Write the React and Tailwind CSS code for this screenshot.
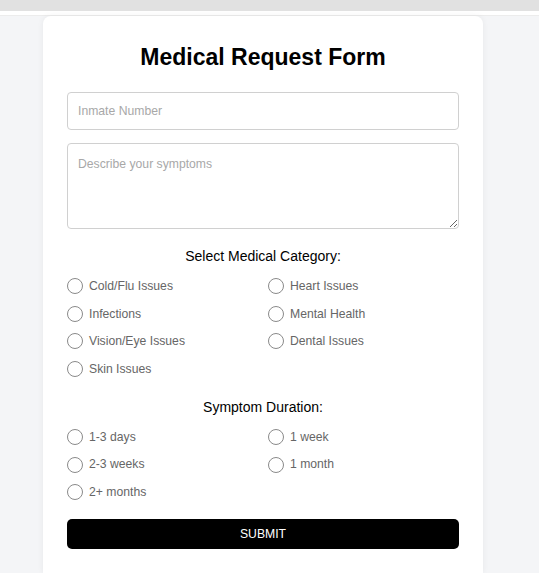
import React from "react";

const categories = [
	"Cold/Flu Issues",
	"Heart Issues",
	"Infections",
	"Mental Health",
	"Vision/Eye Issues",
	"Dental Issues",
	"Skin Issues",
];

const durations = ["1-3 days", "1 week", "2-3 weeks", "1 month", "2+ months"];

function Radio({ label }) {
	return (
		<label className="flex items-center h-[18px] gap-[6px] cursor-pointer">
			<span className="w-[16px] h-[16px] rounded-full border border-[#8a8a8a] bg-white shrink-0"></span>
			<span className="text-[12.2px] text-[#666666]">{label}</span>
		</label>
	);
}

function App() {
	return (
		<div
			className="min-h-[573px] bg-[#f4f5f7] flex flex-col"
			style={{ fontFamily: '"Liberation Sans", Arial, sans-serif' }}>
			{/* browser-ish top strip */}
			<div className="h-[11px] bg-[#e1e1e1]"></div>
			<div className="h-[5px] bg-white border-b border-[#ececec]"></div>

			<div className="ml-[43px] w-[440px] bg-white rounded-t-[8px] shadow-[0_0_6px_rgba(0,0,0,0.06)] px-[24px] pt-[27px] pb-[24px] flex flex-col">
				<h1 className="text-[23px] leading-[28px] font-bold text-black text-center">
					Medical Request Form
				</h1>

				<input
					type="text"
					placeholder="Inmate Number"
					className="mt-[21px] h-[38px] w-full border border-[#d0d0d0] rounded-[4px] px-[10px] text-[12.2px] placeholder:text-[#a8a8a8] outline-none"
				/>

				<textarea
					placeholder="Describe your symptoms"
					className="mt-[13px] h-[86px] w-full border border-[#d0d0d0] rounded-[4px] px-[10px] py-[11px] text-[12.2px] placeholder:text-[#a8a8a8] outline-none"></textarea>

				<h2 className="mt-[18px] text-[14px] leading-[18px] text-black text-center">
					Select Medical Category:
				</h2>
				<div className="mt-[12px] grid grid-cols-2 gap-x-[10px] gap-y-[9.7px]">
					{categories.map((c) => (
						<Radio key={c} label={c} />
					))}
				</div>

				<h2 className="mt-[20px] text-[14px] leading-[18px] text-black text-center">
					Symptom Duration:
				</h2>
				<div className="mt-[12px] grid grid-cols-2 gap-x-[10px] gap-y-[9.5px]">
					{durations.map((d) => (
						<Radio key={d} label={d} />
					))}
				</div>

				<button className="mt-[18px] h-[30px] w-full bg-black text-white text-[12.2px] rounded-[5px]">
					SUBMIT
				</button>
			</div>
		</div>
	);
}

export default App;
